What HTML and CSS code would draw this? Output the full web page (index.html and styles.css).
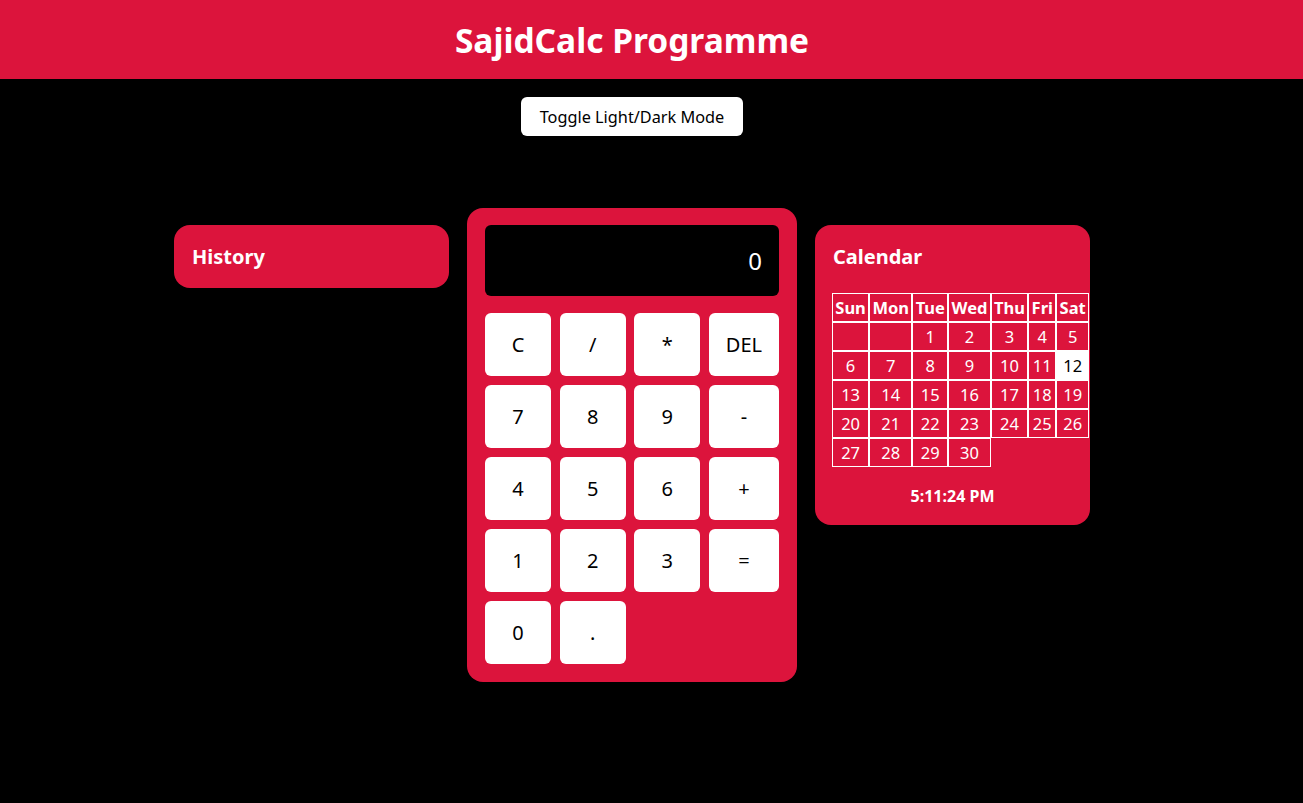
FILE: index.html
```html
<!DOCTYPE html>
<html lang="en">
<head>
<meta charset="utf-8">
<title>SajidCalc Programme</title>
<link rel="stylesheet" href="styles.css">
</head>
<body>
<header class="site-header">
  <h1 class="title">SajidCalc Programme</h1>
</header>
<div class="toggle-row">
  <button class="toggle-btn">Toggle Light/Dark Mode</button>
</div>
<main class="layout">
  <section class="panel history">
    <h3 class="panel-title">History</h3>
  </section>
  <section class="calculator">
    <div class="display">0</div>
    <div class="keys">
      <button class="key">C</button>
      <button class="key">/</button>
      <button class="key">*</button>
      <button class="key">DEL</button>
      <button class="key">7</button>
      <button class="key">8</button>
      <button class="key">9</button>
      <button class="key">-</button>
      <button class="key">4</button>
      <button class="key">5</button>
      <button class="key">6</button>
      <button class="key">+</button>
      <button class="key">1</button>
      <button class="key">2</button>
      <button class="key">3</button>
      <button class="key">=</button>
      <button class="key">0</button>
      <button class="key">.</button>
    </div>
  </section>
  <section class="panel calendar">
    <h3 class="panel-title">Calendar</h3>
    <table class="cal-table">
      <thead>
        <tr><th>Sun</th><th>Mon</th><th>Tue</th><th>Wed</th><th>Thu</th><th>Fri</th><th>Sat</th></tr>
      </thead>
      <tbody>
        <tr><td></td><td></td><td>1</td><td>2</td><td>3</td><td>4</td><td>5</td></tr>
        <tr><td>6</td><td>7</td><td>8</td><td>9</td><td>10</td><td>11</td><td class="today">12</td></tr>
        <tr><td>13</td><td>14</td><td>15</td><td>16</td><td>17</td><td>18</td><td>19</td></tr>
        <tr><td>20</td><td>21</td><td>22</td><td>23</td><td>24</td><td>25</td><td>26</td></tr>
        <tr><td>27</td><td>28</td><td>29</td><td>30</td></tr>
      </tbody>
    </table>
    <div class="clock">5:11:24 PM</div>
  </section>
</main>
</body>
</html>
```

FILE: styles.css
```css
* { box-sizing: border-box; }

body {
  margin: 0;
  background: #000;
  color: #fff;
  font-family: "Noto Sans", "Open Sans", sans-serif;
}

.site-header {
  background: #dc143c;
  height: 79px;
  display: flex;
  align-items: center;
  justify-content: center;
  padding-right: 39px;
}

.title {
  margin: 0;
  font-size: 33.5px;
  font-weight: 700;
  color: #fff;
}

.toggle-row {
  display: flex;
  justify-content: center;
  padding-right: 39px;
  margin-top: 18px;
}

.toggle-btn {
  height: 39px;
  padding: 0 19px;
  border: none;
  border-radius: 6px;
  background: #fff;
  color: #000;
  font-family: inherit;
  font-size: 16.3px;
}

.layout {
  display: flex;
  justify-content: center;
  align-items: flex-start;
  gap: 18px;
  padding-right: 39px;
  margin-top: 72px;
}

.panel {
  width: 275px;
  margin-top: 17px;
  background: #dc143c;
  border-radius: 16px;
  padding: 18px;
}

.panel-title {
  margin: 0;
  font-size: 20px;
  line-height: 27px;
  font-weight: 700;
}

.calculator {
  width: 330px;
  background: #dc143c;
  border-radius: 16px;
  padding: 17px 18px 18px;
}

.display {
  height: 71px;
  background: #000;
  border-radius: 6px;
  color: #fff;
  font-size: 24px;
  display: flex;
  align-items: center;
  justify-content: flex-end;
  padding-right: 17px;
}

.keys {
  margin-top: 17px;
  display: grid;
  grid-template-columns: 66px 66px 66px 70px;
  grid-auto-rows: 63px;
  column-gap: 8.67px;
  row-gap: 9px;
}

.key {
  border: none;
  border-radius: 6px;
  background: #fff;
  color: #000;
  font-family: inherit;
  font-size: 20px;
  padding: 0;
}

.cal-table {
  margin-top: 23px;
  margin-left: -1px;
  border-collapse: separate;
  border-spacing: 0;
  font-size: 16.5px;
}

.cal-table th,
.cal-table td {
  border: 1px solid #fff;
  padding: 2px 2.3px;
  line-height: 23px;
  text-align: center;
}

.cal-table th {
  font-weight: 700;
}

.cal-table td.today {
  background: #fff;
  color: #000;
}

.clock {
  margin-top: 18px;
  text-align: center;
  font-weight: 700;
  font-size: 16px;
  line-height: 22px;
}
```
